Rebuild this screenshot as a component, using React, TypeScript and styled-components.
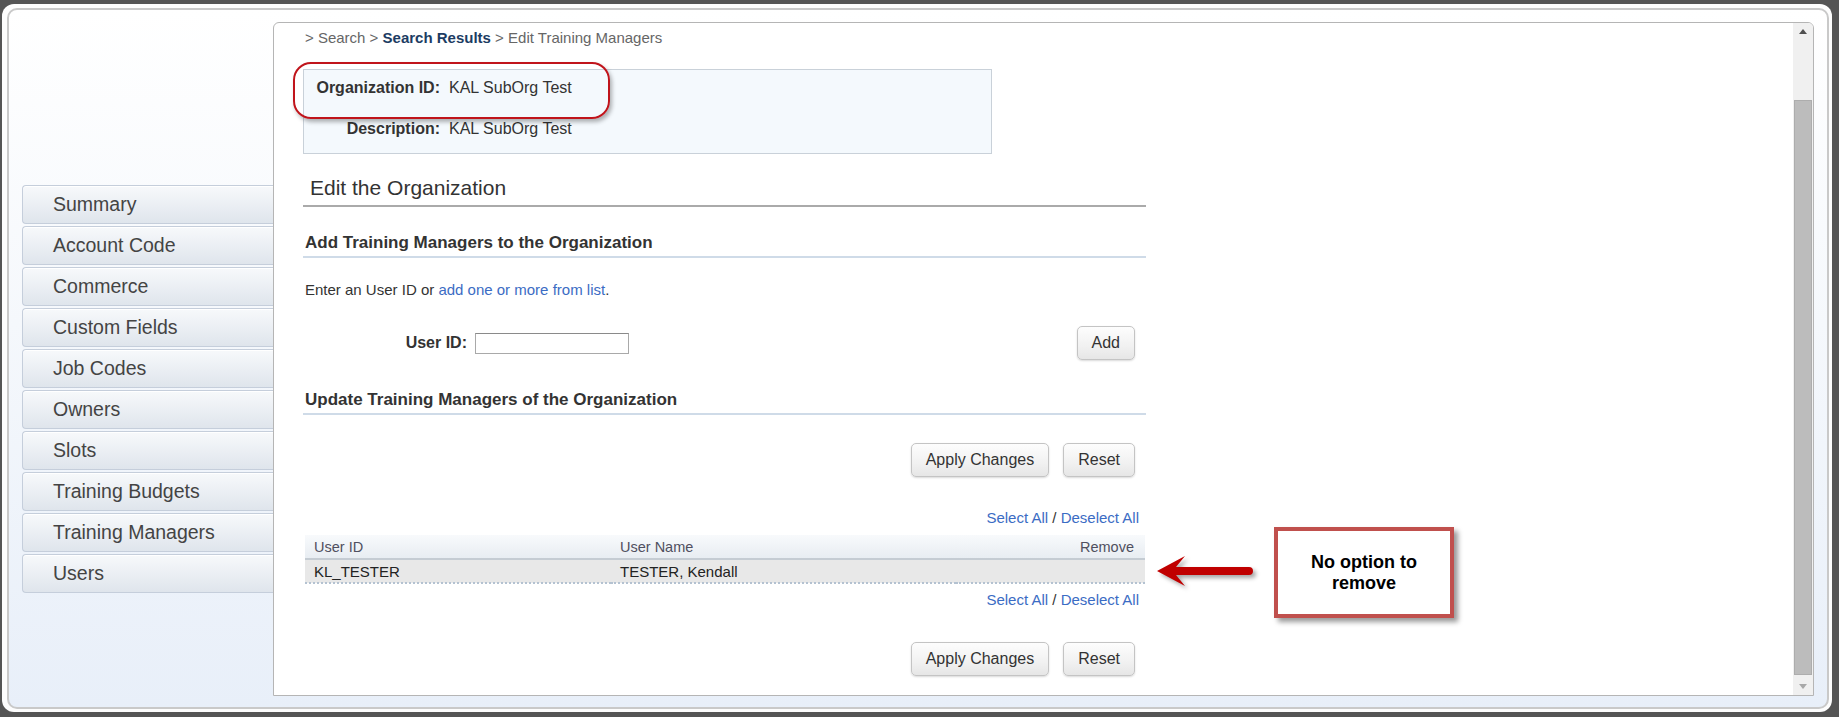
import React from "react";
import styled, { createGlobalStyle } from "styled-components";

const colors = {
  frame: "#555555",
  text: "#333333",
  muted: "#666666",
  link: "#3b6cc4",
  navy: "#1c3c63",
  red: "#c00000",
  callout: "#c0504d",
};

const navItems = [
  "Summary",
  "Account Code",
  "Commerce",
  "Custom Fields",
  "Job Codes",
  "Owners",
  "Slots",
  "Training Budgets",
  "Training Managers",
  "Users",
];

const GlobalStyle = createGlobalStyle`
  * { box-sizing: border-box; }
  html, body { margin: 0; padding: 0; }
  body {
    font-family: "Liberation Sans", Arial, sans-serif;
    color: ${colors.text};
  }
`;

const Frame = styled.div`
  position: relative;
  width: 1839px;
  height: 717px;
  display: flex;
  padding: 4px 7px 5px 2px;
  background: ${colors.frame};
`;

const OuterRing = styled.div`
  flex: 1;
  display: flex;
  padding: 4px 3px 3px 5px;
  background: #fdfdfd;
  border-radius: 12px;
`;

const Shell = styled.div`
  flex: 1;
  display: flex;
  padding: 12px 13px 11px 13px;
  border: 2px solid #c9c9c9;
  border-radius: 10px;
  background: linear-gradient(180deg, #ffffff 0%, #f5f8fc 45%, #e8eff9 100%);
`;

const Sidebar = styled.nav`
  width: 251px;
  flex-shrink: 0;
  align-self: flex-start;
  margin-top: 163px;
  display: flex;
  flex-direction: column;
  gap: 2px;
`;

const NavItem = styled.div`
  height: 39px;
  display: flex;
  align-items: center;
  padding-left: 30px;
  font-size: 19.5px;
  color: #444;
  border: 1px solid #c5cedb;
  border-right: none;
  border-radius: 4px 0 0 4px;
  background: linear-gradient(180deg, #f7f9fb 0%, #eaeef3 55%, #dfe5ec 100%);
  box-shadow: inset 0 1px 0 #ffffff;
`;

const ContentPanel = styled.div`
  flex: 1;
  display: flex;
  background: #ffffff;
  border: 1px solid #b5b5b5;
  border-radius: 6px 6px 0 0;
  overflow: hidden;
`;

const Main = styled.main`
  flex: 1;
  padding: 6px 0 0 29px;
`;

const Column = styled.div`
  width: 843px;
`;

const Breadcrumb = styled.div`
  padding-left: 2px;
  font-size: 15px;
  line-height: 18px;
  color: ${colors.muted};

  strong {
    color: ${colors.navy};
  }
`;

const InfoBox = styled.div`
  position: relative;
  width: 689px;
  margin-top: 22px;
  padding: 9px 0 15px;
  display: grid;
  grid-template-columns: 136px 1fr;
  column-gap: 9px;
  row-gap: 23px;
  background: #f4f9fd;
  border: 1px solid #c9d1d9;
  font-size: 16px;
  line-height: 18px;
`;

const InfoLabel = styled.span`
  text-align: right;
  font-weight: bold;
`;

const Highlight = styled.div`
  position: absolute;
  left: -11px;
  top: -8px;
  width: 317px;
  height: 57px;
  border: 2px solid #c0141b;
  border-radius: 18px;
  box-shadow: 2px 3px 4px rgba(0, 0, 0, 0.3);
  pointer-events: none;
`;

const PageTitle = styled.h2`
  margin: 22px 0 0;
  padding: 0 0 5px 7px;
  font-size: 21px;
  line-height: 24px;
  font-weight: normal;
  color: ${colors.text};
  border-bottom: 2px solid #aaaaaa;
`;

const SectionTitle = styled.h3<{ $top: number }>`
  margin: ${(p) => p.$top}px 0 0;
  padding: 0 0 3px 2px;
  font-size: 17px;
  line-height: 20px;
  font-weight: bold;
  color: ${colors.text};
  border-bottom: 2px solid #cfdbe8;
`;

const Intro = styled.p`
  margin: 23px 0 0;
  padding-left: 2px;
  font-size: 15px;
  line-height: 18px;
`;

const Link = styled.a`
  color: ${colors.link};
  text-decoration: none;
  cursor: pointer;
`;

const UserRow = styled.div`
  margin-top: 27px;
  display: flex;
  align-items: center;
  padding-right: 11px;
`;

const FieldLabel = styled.label`
  width: 164px;
  margin-right: 8px;
  text-align: right;
  font-size: 16px;
  font-weight: bold;
`;

const TextInput = styled.input`
  width: 154px;
  height: 21px;
  border: 1px solid #a9a9a9;
  border-top-color: #8a8a8a;
  font-family: inherit;
`;

const ButtonRow = styled.div<{ $top: number }>`
  margin-top: ${(p) => p.$top}px;
  display: flex;
  justify-content: flex-end;
  gap: 14px;
  padding-right: 11px;
`;

const Button = styled.button<{ $push?: boolean }>`
  height: 34px;
  padding: 0 14px;
  margin-left: ${(p) => (p.$push ? "auto" : "0")};
  font-family: inherit;
  font-size: 16px;
  color: ${colors.text};
  border: 1px solid #c4c4c4;
  border-radius: 5px;
  background: linear-gradient(180deg, #fdfdfd 0%, #f1f1f1 60%, #e6e6e6 100%);
  box-shadow: 0 1px 2px rgba(0, 0, 0, 0.15);
`;

const SelectLinks = styled.div<{ $top: number }>`
  margin-top: ${(p) => p.$top}px;
  padding-right: 7px;
  text-align: right;
  font-size: 15px;
  line-height: 18px;
`;

const Table = styled.table`
  width: 840px;
  margin: 8px 0 0 2px;
  border-collapse: collapse;

  th {
    height: 24px;
    padding: 0 9px;
    text-align: left;
    font-size: 14.5px;
    font-weight: normal;
    color: #505060;
    background: linear-gradient(180deg, #f8fafc 0%, #e8edf2 100%);
    border-bottom: 2px solid #c5ccd3;

    &:last-child {
      text-align: right;
      padding-right: 11px;
    }
  }

  td {
    height: 24px;
    padding: 0 9px;
    font-size: 15px;
    color: #222;
    background: #e8e8e8;
    border-bottom: 2px dotted #b4c2d1;
  }
`;

const Scrollbar = styled.div`
  width: 20px;
  display: flex;
  flex-direction: column;
  background: #f0f0f0;
`;

const ScrollArrow = styled.div<{ $dir: "up" | "down" }>`
  height: 17px;
  display: flex;
  align-items: center;
  justify-content: center;

  &::after {
    content: "";
    border-left: 4px solid transparent;
    border-right: 4px solid transparent;
    ${(p) =>
      p.$dir === "up"
        ? "border-bottom: 5px solid #505050;"
        : "border-top: 5px solid #a8a8a8;"}
  }
`;

const ScrollGap = styled.div<{ $h: number }>`
  height: ${(p) => p.$h}px;
`;

const Thumb = styled.div`
  flex: 1;
  margin: 0 1px;
  background: #bcbcbc;
  border: 1px solid #adadad;
`;

const ArrowMark = styled.svg`
  position: absolute;
  left: 1155px;
  top: 554px;
  overflow: visible;
  filter: drop-shadow(3px 3px 2px rgba(0, 0, 0, 0.35));
`;

const Callout = styled.div`
  position: absolute;
  left: 1274px;
  top: 527px;
  width: 180px;
  height: 91px;
  display: flex;
  align-items: center;
  justify-content: center;
  text-align: center;
  font-size: 18px;
  line-height: 21px;
  font-weight: bold;
  color: #000;
  background: #ffffff;
  border: 4px solid ${colors.callout};
  box-shadow: 4px 4px 5px rgba(0, 0, 0, 0.4);
`;

const SelectAll = ({ top }: { top: number }) => (
  <SelectLinks $top={top}>
    <Link>Select All</Link> / <Link>Deselect All</Link>
  </SelectLinks>
);

const Actions = ({ top }: { top: number }) => (
  <ButtonRow $top={top}>
    <Button>Apply Changes</Button>
    <Button>Reset</Button>
  </ButtonRow>
);

const App: React.FC = () => {
  return (
    <>
      <GlobalStyle />
      <Frame>
        <OuterRing>
          <Shell>
            <Sidebar>
              {navItems.map((item) => (
                <NavItem key={item}>{item}</NavItem>
              ))}
            </Sidebar>
            <ContentPanel>
              <Main>
                <Column>
                  <Breadcrumb>
                    &gt; Search &gt; <strong>Search Results</strong> &gt; Edit
                    Training Managers
                  </Breadcrumb>
                  <InfoBox>
                    <InfoLabel>Organization ID:</InfoLabel>
                    <span>KAL SubOrg Test</span>
                    <InfoLabel>Description:</InfoLabel>
                    <span>KAL SubOrg Test</span>
                    <Highlight />
                  </InfoBox>
                  <PageTitle>Edit the Organization</PageTitle>
                  <SectionTitle $top={26}>
                    Add Training Managers to the Organization
                  </SectionTitle>
                  <Intro>
                    Enter an User ID or <Link>add one or more from list</Link>.
                  </Intro>
                  <UserRow>
                    <FieldLabel htmlFor="uid">User ID:</FieldLabel>
                    <TextInput id="uid" />
                    <Button $push>Add</Button>
                  </UserRow>
                  <SectionTitle $top={30}>
                    Update Training Managers of the Organization
                  </SectionTitle>
                  <Actions top={28} />
                  <SelectAll top={32} />
                  <Table>
                    <thead>
                      <tr>
                        <th style={{ width: 306 }}>User ID</th>
                        <th>User Name</th>
                        <th>Remove</th>
                      </tr>
                    </thead>
                    <tbody>
                      <tr>
                        <td>KL_TESTER</td>
                        <td>TESTER, Kendall</td>
                        <td />
                      </tr>
                    </tbody>
                  </Table>
                  <SelectAll top={7} />
                  <Actions top={33} />
                </Column>
              </Main>
              <Scrollbar>
                <ScrollArrow $dir="up" />
                <ScrollGap $h={60} />
                <Thumb />
                <ScrollGap $h={3} />
                <ScrollArrow $dir="down" />
              </Scrollbar>
            </ContentPanel>
          </Shell>
        </OuterRing>
        <ArrowMark width="100" height="34" viewBox="0 0 100 34">
          <path
            d="M2 17 L30 2 L21 13 L94 13 A4 4 0 0 1 94 21 L21 21 L30 32 Z"
            fill={colors.red}
          />
        </ArrowMark>
        <Callout>
          No option to
          <br />
          remove
        </Callout>
      </Frame>
    </>
  );
};

export default App;
